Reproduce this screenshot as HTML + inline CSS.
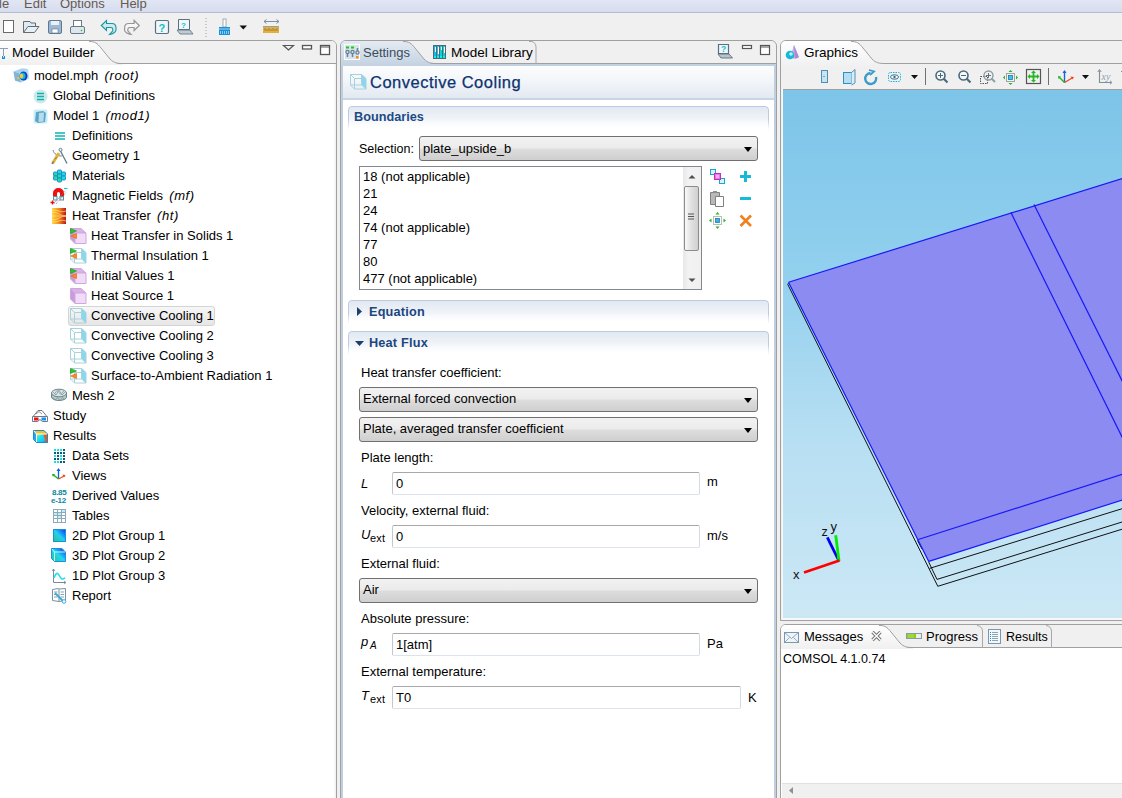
<!DOCTYPE html><html><head><meta charset="utf-8"><style>
*{box-sizing:border-box;margin:0;padding:0}
html,body{width:1122px;height:798px;overflow:hidden;background:#f0f0f0;font-family:"Liberation Sans",sans-serif;font-size:13px;color:#000}
.a{position:absolute}
svg{position:absolute;overflow:visible}
.t{position:absolute;white-space:pre;line-height:20px;height:20px}
.it{font-style:italic}
.sf{font-style:italic;letter-spacing:0.6px;margin-left:2px}
.pnl{position:absolute;border:1px solid #a0a0a0;border-radius:6px 6px 0 0;background:#fff;overflow:hidden}
.inp{position:absolute;background:#fff;border:1px solid #c4c8ce;border-top-color:#a8a8a8;border-bottom-color:#dde3ec;border-right-color:#d4dae4;border-radius:2px}
.inp span{position:absolute;left:3px;top:0;line-height:20px;white-space:pre}
.cmb{position:absolute;border:1px solid #707070;border-radius:3px;background:linear-gradient(#f2f2f2 0%,#ebebeb 48%,#dddddd 52%,#cfcfcf 100%)}
.cmb span{position:absolute;left:3px;top:1px;line-height:20px;white-space:pre}
.cmb i{position:absolute;right:5px;top:10px;width:0;height:0;border-left:4px solid transparent;border-right:4px solid transparent;border-top:5px solid #000}
.sec{position:absolute;left:348px;width:421px;height:24px;border:1px solid #bccbdf;border-bottom:none;border-radius:4px 4px 0 0;background:linear-gradient(#e1e8f1,#fff);-webkit-mask-image:linear-gradient(#000 55%,rgba(0,0,0,0) 100%)}
.sec b{position:absolute;left:20px;top:0;line-height:20px;color:#1d4a86;font-size:13px;white-space:pre}
.lb{position:absolute;white-space:pre;line-height:20px}
</style></head><body>
<div class="a" style="left:0;top:0;width:1122px;height:13px;background:linear-gradient(#e2e6f4,#d7ddef);border-bottom:1px solid #b4bccd"></div>
<div class="t" style="left:-1px;top:-6px;color:#665a4e">le</div>
<div class="t" style="left:24px;top:-6px;color:#665a4e">Edit</div>
<div class="t" style="left:60px;top:-6px;color:#665a4e">Options</div>
<div class="t" style="left:120px;top:-6px;color:#665a4e">Help</div>
<div id="tbar"></div>
<div class="pnl" style="left:-8px;top:40px;width:345px;height:770px">
 <div class="a" style="left:0;top:0;width:343px;height:23px;background:#f0f0f0;border-bottom:1px solid #a0a0a0"></div>
 <svg width="140" height="24" style="left:0;top:0"><defs><linearGradient id="g1" x1="0" y1="0" x2="0" y2="1"><stop offset="0" stop-color="#fff"/><stop offset="1" stop-color="#f0f0f0"/></linearGradient></defs><path d="M0,0 L96,0 C102,0 104,2 108,7 L117,18 C121,22 124,23 130,23 L130,24 L0,24 Z" fill="url(#g1)"/><path d="M96,0.5 C102,0.5 104,2 108,7 L117,18 C121,22 124,22.5 130,22.5" fill="none" stroke="#a0a0a0" stroke-width="1"/></svg>
</div>
<div class="a" style="left:334px;top:64px;width:2px;height:734px;background:linear-gradient(90deg,#fafafa,#f0f0f0)"></div>
<svg width="12" height="16" style="left:0;top:45px"><path d="M0,3.5 H8 M3.5,3.5 V11" stroke="#8aa0b4" stroke-width="1" fill="none"/><path d="M2,11 H3 V12.5 H4 V11 H5 V14 H2 Z" fill="#1a8ae0"/></svg>
<div class="t" style="left:12px;top:43px;font-size:13.5px">Model Builder</div>
<svg width="60" height="20" style="left:280px;top:42px"><path d="M3.5,3.5 L13.5,3.5 L8.5,8 Z" fill="none" stroke="#555" stroke-width="1.2"/><rect x="22.5" y="3.5" width="9" height="3.5" fill="#fff" stroke="#555" stroke-width="1.3"/><rect x="40.5" y="3.5" width="9" height="9" fill="#fff" stroke="#555" stroke-width="1.3"/><path d="M40.5,5 H49.5" stroke="#555"/></svg>
<div class="a" style="left:68px;top:306px;width:147px;height:20px;border:1px solid #d4d4d4;border-radius:3px;background:linear-gradient(#f7f7f7,#e6e6e6)"></div>
<div class="t" style="left:34px;top:66px">model.mph<span class="sf"> (root)</span></div>
<svg width="16" height="16" style="left:13px;top:68px"><path d="M0.5,3.5 L9,0.5 L15,1 L16,10.5 L8,14.5 L2,12.5 Z" fill="#cfe6f6"/><path d="M0.5,3.5 L6,5 L8,14.5 L2,12.5 Z" fill="#7fb4dc"/><path d="M6,5 L15,1 L16,10.5 L8,14.5 Z" fill="#b8daf2"/><path d="M0.5,3.5 L9,0.5 L15,1 L6,5 Z" fill="#a8d0ec"/><ellipse cx="10.5" cy="8" rx="4" ry="4.5" fill="#0a40c8"/><ellipse cx="9.5" cy="8" rx="3" ry="3.3" fill="#10b8d8"/><ellipse cx="8.5" cy="8" rx="1.8" ry="2.2" fill="#f0c838"/><circle cx="5" cy="10" r="1.3" fill="#e8c040"/></svg>
<div class="t" style="left:53px;top:86px">Global Definitions</div>
<svg width="16" height="16" style="left:33px;top:89px"><circle cx="7.5" cy="7.5" r="7" fill="#cdeaea"/><path d="M4,4.5 H11 M4,7.5 H11 M4,10.5 H11" stroke="#10b0b0" stroke-width="1.6"/></svg>
<div class="t" style="left:53px;top:106px">Model 1<span class="sf"> (mod1)</span></div>
<svg width="16" height="16" style="left:33px;top:109px"><rect x="0.5" y="0.5" width="14" height="14" rx="2" fill="#c9eef6"/><path d="M3,3 L10,2 L13,4 L12,13 L5,14 L2,12 Z" fill="#5aa6cc"/><path d="M6,4 L11,3.5 L10.5,12.5 L5.5,13 Z" fill="#b6dcec"/></svg>
<div class="t" style="left:72px;top:126px">Definitions</div>
<svg width="16" height="16" style="left:51px;top:127px"><path d="M4,6 H14 M4,9 H14 M4,12 H14" stroke="#10b4b0" stroke-width="1.7"/></svg>
<div class="t" style="left:72px;top:146px">Geometry 1</div>
<svg width="16" height="16" style="left:51px;top:148px"><path d="M9.5,3 L16,15.5" stroke="#5a7a86" stroke-width="1.3" fill="none"/><path d="M2,2 C3,6 6,8 11,8" stroke="#6a8a94" stroke-width="1" fill="none"/><circle cx="9.5" cy="1.8" r="1.5" fill="#fff" stroke="#5a7a86" stroke-width="1"/><path d="M1.5,15.5 L8,5" stroke="#e8b038" stroke-width="3"/><path d="M1,16 L2.5,13.5" stroke="#5a7a86" stroke-width="1.2"/><path d="M3.5,11 L6,9.5" stroke="#5a7a86" stroke-width="0.7"/></svg>
<div class="t" style="left:72px;top:166px">Materials</div>
<svg width="16" height="16" style="left:53px;top:169px"><rect x="4.5" y="1" width="4" height="4" rx="1" fill="#20d8e8" stroke="#1888c0" stroke-width="0.9"/><rect x="4.5" y="5" width="4" height="4" rx="1" fill="#20d8e8" stroke="#1888c0" stroke-width="0.9"/><rect x="4.5" y="9" width="4" height="4" rx="1" fill="#20d8e8" stroke="#1888c0" stroke-width="0.9"/><rect x="0.5" y="3" width="4" height="4" rx="1" fill="#20d8e8" stroke="#1888c0" stroke-width="0.9"/><rect x="0.5" y="7" width="4" height="4" rx="1" fill="#20d8e8" stroke="#1888c0" stroke-width="0.9"/><rect x="8.5" y="3" width="4" height="4" rx="1" fill="#20d8e8" stroke="#1888c0" stroke-width="0.9"/><rect x="8.5" y="7" width="4" height="4" rx="1" fill="#20d8e8" stroke="#1888c0" stroke-width="0.9"/><g fill="#30e030"><rect x="1.8" y="4.3" width="1.6" height="1.6"/><rect x="1.8" y="8.3" width="1.6" height="1.6"/><rect x="5.8" y="6.3" width="1.6" height="1.6"/><rect x="5.8" y="10.3" width="1.6" height="1.6"/></g></svg>
<div class="t" style="left:72px;top:186px">Magnetic Fields<span class="sf"> (mf)</span></div>
<svg width="16" height="16" style="left:51px;top:188px"><path d="M2,8 L2,5 A5.5,5 0 0 1 13,5 L13,8 L9,8 L9,5.5 A1.5,1.5 0 0 0 6,5.5 L6,8 Z" fill="#ec1010"/><rect x="2.5" y="8.5" width="3.5" height="3.5" fill="#e8f4f8" stroke="#6a8a98" stroke-width="1"/><rect x="9" y="8.5" width="3.5" height="3.5" fill="#e8f4f8" stroke="#6a8a98" stroke-width="1"/><path d="M3,15.5 L14.5,2.5 M5,16 L15.5,4" stroke="#6a8a98" stroke-width="0.9" stroke-dasharray="1,1"/><path d="M-0.5,14.5 h4 M1.5,12.5 v4" stroke="#e81010" stroke-width="1.3"/><path d="M13,0.5 h3.5" stroke="#18c0e0" stroke-width="1.2"/></svg>
<div class="t" style="left:72px;top:206px">Heat Transfer<span class="sf"> (ht)</span></div>
<svg width="16" height="16" style="left:51px;top:208px"><defs><linearGradient id="hg" x1="0" y1="0" x2="1" y2="0"><stop offset="0" stop-color="#ffd838"/><stop offset="0.5" stop-color="#f88a18"/><stop offset="1" stop-color="#b81818"/></linearGradient></defs><rect x="1" y="0" width="14" height="16" fill="url(#hg)"/><path d="M1,4 C7,4 9,8 15,8 M1,8 H15 M1,12 C7,12 9,8 15,8 M1,2 C8,2 9,5 15,3 M1,14 C8,14 9,11 15,13" stroke="#ffe890" stroke-width="0.8" fill="none" opacity="0.8"/></svg>
<div class="t" style="left:91px;top:226px">Heat Transfer in Solids 1</div>
<svg width="16" height="16" style="left:70px;top:228px"><path d="M0.5,0.5 L11,0.5 L16,5 L16,15.5 L5,15.5 L0.5,11 Z" fill="#f0dcf7"/><path d="M0.5,0.5 L11,0.5 L16,5 L5,5 Z" fill="#d9b2e8"/><path d="M0.5,0.5 L5,5 L5,15.5 L0.5,11 Z" fill="#c99bdc"/><path d="M0.5,0.5 L11,0.5 L16,5 L16,15.5 L5,15.5 L0.5,11 Z M5,5 H16 M5,5 V15.5" fill="none" stroke="#cfa6e0" stroke-width="1"/><path d="M0.5,0.5 L6.5,3 L0.5,5.5 Z" fill="#30c030" stroke="#20a020" stroke-width="0.7"/><path d="M6.5,5.5 L0.7,8 L6.5,10.5 Z" fill="#f88a2a" stroke="#e86a18" stroke-width="0.7"/></svg>
<div class="t" style="left:91px;top:246px">Thermal Insulation 1</div>
<svg width="16" height="16" style="left:70px;top:248px"><path d="M12,0.5 L16,4.5 L16,15 L12,11 Z" fill="#86d8ee"/><path d="M0.5,0.5 H11.5 V11 H0.5 Z M4.5,4.5 H16 V15 H4.5 Z M0.5,0.5 L4.5,4.5 M11.5,0.5 L16,4.5 M0.5,11 L4.5,15 M11.5,11 L16,15" fill="none" stroke="#a6d2dc" stroke-width="1"/><path d="M0.5,0.5 L6.5,3 L0.5,5.5 Z" fill="#30c030" stroke="#20a020" stroke-width="0.7"/><path d="M6.5,5.5 L0.7,8 L6.5,10.5 Z" fill="#f88a2a" stroke="#e86a18" stroke-width="0.7"/></svg>
<div class="t" style="left:91px;top:266px">Initial Values 1</div>
<svg width="16" height="16" style="left:70px;top:268px"><path d="M0.5,0.5 L11,0.5 L16,5 L16,15.5 L5,15.5 L0.5,11 Z" fill="#f0dcf7"/><path d="M0.5,0.5 L11,0.5 L16,5 L5,5 Z" fill="#d9b2e8"/><path d="M0.5,0.5 L5,5 L5,15.5 L0.5,11 Z" fill="#c99bdc"/><path d="M0.5,0.5 L11,0.5 L16,5 L16,15.5 L5,15.5 L0.5,11 Z M5,5 H16 M5,5 V15.5" fill="none" stroke="#cfa6e0" stroke-width="1"/><path d="M0.5,0.5 L6.5,3 L0.5,5.5 Z" fill="#30c030" stroke="#20a020" stroke-width="0.7"/><path d="M6.5,5.5 L0.7,8 L6.5,10.5 Z" fill="#f88a2a" stroke="#e86a18" stroke-width="0.7"/></svg>
<div class="t" style="left:91px;top:286px">Heat Source 1</div>
<svg width="16" height="16" style="left:70px;top:288px"><path d="M0.5,0.5 L11,0.5 L16,5 L16,15.5 L5,15.5 L0.5,11 Z" fill="#f0dcf7"/><path d="M0.5,0.5 L11,0.5 L16,5 L5,5 Z" fill="#d9b2e8"/><path d="M0.5,0.5 L5,5 L5,15.5 L0.5,11 Z" fill="#c99bdc"/><path d="M0.5,0.5 L11,0.5 L16,5 L16,15.5 L5,15.5 L0.5,11 Z M5,5 H16 M5,5 V15.5" fill="none" stroke="#cfa6e0" stroke-width="1"/></svg>
<div class="t" style="left:91px;top:306px">Convective Cooling 1</div>
<svg width="16" height="16" style="left:70px;top:308px"><path d="M12,0.5 L16,4.5 L16,15 L12,11 Z" fill="#86d8ee"/><path d="M0.5,0.5 H11.5 V11 H0.5 Z M4.5,4.5 H16 V15 H4.5 Z M0.5,0.5 L4.5,4.5 M11.5,0.5 L16,4.5 M0.5,11 L4.5,15 M11.5,11 L16,15" fill="none" stroke="#a6d2dc" stroke-width="1"/></svg>
<div class="t" style="left:91px;top:326px">Convective Cooling 2</div>
<svg width="16" height="16" style="left:70px;top:328px"><path d="M12,0.5 L16,4.5 L16,15 L12,11 Z" fill="#86d8ee"/><path d="M0.5,0.5 H11.5 V11 H0.5 Z M4.5,4.5 H16 V15 H4.5 Z M0.5,0.5 L4.5,4.5 M11.5,0.5 L16,4.5 M0.5,11 L4.5,15 M11.5,11 L16,15" fill="none" stroke="#a6d2dc" stroke-width="1"/></svg>
<div class="t" style="left:91px;top:346px">Convective Cooling 3</div>
<svg width="16" height="16" style="left:70px;top:348px"><path d="M12,0.5 L16,4.5 L16,15 L12,11 Z" fill="#86d8ee"/><path d="M0.5,0.5 H11.5 V11 H0.5 Z M4.5,4.5 H16 V15 H4.5 Z M0.5,0.5 L4.5,4.5 M11.5,0.5 L16,4.5 M0.5,11 L4.5,15 M11.5,11 L16,15" fill="none" stroke="#a6d2dc" stroke-width="1"/></svg>
<div class="t" style="left:91px;top:366px">Surface-to-Ambient Radiation 1</div>
<svg width="16" height="16" style="left:70px;top:368px"><path d="M12,0.5 L16,4.5 L16,15 L12,11 Z" fill="#86d8ee"/><path d="M0.5,0.5 H11.5 V11 H0.5 Z M4.5,4.5 H16 V15 H4.5 Z M0.5,0.5 L4.5,4.5 M11.5,0.5 L16,4.5 M0.5,11 L4.5,15 M11.5,11 L16,15" fill="none" stroke="#a6d2dc" stroke-width="1"/><path d="M0.5,0.5 L6.5,3 L0.5,5.5 Z" fill="#30c030" stroke="#20a020" stroke-width="0.7"/><path d="M6.5,5.5 L0.7,8 L6.5,10.5 Z" fill="#f88a2a" stroke="#e86a18" stroke-width="0.7"/></svg>
<div class="t" style="left:72px;top:386px">Mesh 2</div>
<svg width="16" height="16" style="left:51px;top:388px"><path d="M0.5,5 V9 A7.5,3.5 0 0 0 15.5,9 V5 Z" fill="#b8c8ca" stroke="#6a8488" stroke-width="1"/><ellipse cx="8" cy="5" rx="7.5" ry="3.8" fill="#d8e4e6" stroke="#6a8488" stroke-width="1"/><g stroke="#7a9498" stroke-width="0.7" fill="none"><path d="M2,4 L5,7 L8,2 L11,7 L14,4 M3,6.5 L6,2.5 L10,6.5 L13,2.8 M1.5,9 L4,12 L6.5,9.5 L9,12.5 L11.5,9.5 L14,12"/></g></svg>
<div class="t" style="left:53px;top:406px">Study</div>
<svg width="16" height="16" style="left:32px;top:409px"><path d="M1.5,7 L6,1.5 L10,1.5 L14.5,7" fill="none" stroke="#6a7a8a" stroke-width="1"/><path d="M4,5 L7,2.5 L10,5" fill="none" stroke="#6a7a8a" stroke-width="0.8"/><path d="M0.5,7.5 H15.5 V12.5 L10.5,12.5 L8,10.5 L5.5,12.5 L0.5,12.5 Z" fill="#fff" stroke="#6a7a8a" stroke-width="1"/><rect x="2" y="8.5" width="4.5" height="3" fill="#f01010"/><rect x="9.5" y="8.5" width="4.5" height="3" fill="#1890f0"/></svg>
<div class="t" style="left:53px;top:426px">Results</div>
<svg width="16" height="16" style="left:33px;top:430px"><defs><linearGradient id="rg" x1="0" y1="0" x2="1" y2="1"><stop offset="0" stop-color="#ffe020"/><stop offset="0.3" stop-color="#20e8f0"/><stop offset="0.7" stop-color="#18c8f0"/><stop offset="1" stop-color="#1060e8"/></linearGradient></defs><path d="M0.5,0.5 L11,0.5 L14.5,4 L14.5,12.5 L3.5,12.5 L0.5,9.5 Z" fill="#28a8e8"/><path d="M3.5,4 H14.5 V12.5 H3.5 Z" fill="url(#rg)"/><path d="M10,4 L14.5,4 L14.5,12.5 L12.5,12.5 C12,9 11,6 10,4Z" fill="#f05818"/><path d="M0.5,0.5 L11,0.5 L14.5,4 L3.5,4 Z" fill="#f8c020"/><path d="M0.5,0.5 L11,0.5 L14.5,4 L14.5,12.5 L3.5,12.5 L0.5,9.5 Z" fill="none" stroke="#2088d0"/><path d="M1,1 L3.5,4 H14 M3.5,4 V12" fill="none" stroke="#fff" stroke-width="1"/></svg>
<div class="t" style="left:72px;top:446px">Data Sets</div>
<svg width="16" height="16" style="left:54px;top:449px"><rect x="0" y="0" width="2" height="2" fill="#18e0e0"/><rect x="3" y="0" width="2" height="2" fill="#18e0e0"/><rect x="6" y="0" width="2" height="2" fill="#18e0e0"/><rect x="9" y="0" width="2" height="2" fill="#0a5a78"/><rect x="0" y="3" width="2" height="2" fill="#0a5a78"/><rect x="3" y="3" width="2" height="2" fill="#0a5a78"/><rect x="6" y="3" width="2" height="2" fill="#0a5a78"/><rect x="9" y="3" width="2" height="2" fill="#0a5a78"/><rect x="0" y="6" width="2" height="2" fill="#18e0e0"/><rect x="3" y="6" width="2" height="2" fill="#0a5a78"/><rect x="6" y="6" width="2" height="2" fill="#18e0e0"/><rect x="9" y="6" width="2" height="2" fill="#0a5a78"/><rect x="0" y="9" width="2" height="2" fill="#0a5a78"/><rect x="3" y="9" width="2" height="2" fill="#0a5a78"/><rect x="6" y="9" width="2" height="2" fill="#18e0e0"/><rect x="9" y="9" width="2" height="2" fill="#0a5a78"/><rect x="0" y="12" width="2" height="2" fill="#18e0e0"/><rect x="3" y="12" width="2" height="2" fill="#18e0e0"/><rect x="6" y="12" width="2" height="2" fill="#0a5a78"/><rect x="9" y="12" width="2" height="2" fill="#0a5a78"/></svg>
<div class="t" style="left:72px;top:466px">Views</div>
<svg width="16" height="16" style="left:51px;top:467px"><path d="M7.5,12 V2" stroke="#1060e0" stroke-width="1.3"/><path d="M5.5,4 L7.5,1 L9.5,4" fill="#1060e0"/><path d="M7.5,12 L2,7.5" stroke="#20b020" stroke-width="1.3"/><path d="M1,7 L4,7 L2,10 Z" fill="#20b020"/><path d="M7.5,12 L14,8.5" stroke="#f04818" stroke-width="1.3"/><path d="M14.5,8 L11.5,7.5 L13,10.5 Z" fill="#f04818"/></svg>
<div class="t" style="left:72px;top:486px">Derived Values</div>
<svg width="16" height="16" style="left:51px;top:488px"><text x="1" y="7" font-family="Liberation Sans" font-size="8" font-weight="bold" fill="#0a88a0" letter-spacing="-0.3">8.85</text><text x="0" y="15" font-family="Liberation Sans" font-size="8" font-weight="bold" fill="#0a88a0" letter-spacing="-0.3">e-12</text></svg>
<div class="t" style="left:72px;top:506px">Tables</div>
<svg width="16" height="16" style="left:52px;top:508px"><rect x="1.5" y="1.5" width="12" height="13" fill="#fff" stroke="#90a8b8"/><path d="M5.5,1.5 V14.5 M9.5,1.5 V14.5 M1.5,4.5 H13.5 M1.5,7.5 H13.5 M1.5,10.5 H13.5" stroke="#90a8b8"/><rect x="10" y="2" width="3" height="2" fill="#b8f0f8"/><rect x="2" y="5" width="3" height="2" fill="#b8f0f8"/><rect x="6" y="5" width="3" height="2" fill="#b8f0f8"/><rect x="6" y="8" width="3" height="2" fill="#b8f0f8"/></svg>
<div class="t" style="left:72px;top:526px">2D Plot Group 1</div>
<svg width="16" height="16" style="left:51px;top:528px"><defs><linearGradient id="p2" x1="1" y1="0" x2="0" y2="1"><stop offset="0" stop-color="#1030f0"/><stop offset="0.5" stop-color="#20d0f0"/><stop offset="1" stop-color="#30c080"/></linearGradient></defs><rect x="2.5" y="1.5" width="12" height="12" fill="url(#p2)" stroke="#1a90e0"/></svg>
<div class="t" style="left:72px;top:546px">3D Plot Group 2</div>
<svg width="16" height="16" style="left:51px;top:548px"><defs><linearGradient id="p3" x1="1" y1="0" x2="0" y2="1"><stop offset="0" stop-color="#1030f0"/><stop offset="0.5" stop-color="#20d8f0"/><stop offset="1" stop-color="#30c080"/></linearGradient></defs><path d="M0.5,0.5 L11,0.5 L14.5,4 L14.5,13.5 L3.5,13.5 L0.5,10.5 Z" fill="url(#p3)" stroke="#1a90e0"/><path d="M1,1 L3.5,4 H14 M3.5,4 V13" fill="none" stroke="#c0f4ff" stroke-width="1"/></svg>
<div class="t" style="left:72px;top:566px">1D Plot Group 3</div>
<svg width="16" height="16" style="left:51px;top:568px"><path d="M2.5,1 V14.5 H15" fill="none" stroke="#7a8a96"/><path d="M1,3 L2.5,1 L4,3 M13,13 L15,14.5 L13,16" fill="none" stroke="#7a8a96" stroke-width="0.8"/><path d="M3,10 C5,5 6,4 8,7 C10,11 11,12 14,10" fill="none" stroke="#20e0f0" stroke-width="1.6"/></svg>
<div class="t" style="left:72px;top:586px">Report</div>
<svg width="16" height="16" style="left:51px;top:587px"><path d="M1.5,2.5 L7.5,1.5 L8,2 L14.5,1.5 L14.5,13.5 L8,14.5 L1.5,13.5 Z" fill="#fff" stroke="#7890a0"/><path d="M8,2 V14" stroke="#7890a0"/><path d="M3,5 H6.5 M3,7.5 H6.5 M3,10 H6.5 M9.5,5 H13 M9.5,7.5 H13 M9.5,10 H13" stroke="#8aa0b0"/><path d="M4,6 L13,15" stroke="#40a8d8" stroke-width="1.8"/><circle cx="13" cy="14.5" r="1.8" fill="#fff" stroke="#40a8d8"/></svg>
<div class="pnl" style="left:340px;top:40px;width:437px;height:770px;background:#bfcfdf">
 <div class="a" style="left:0;top:0;width:435px;height:23px;background:#f0f0f0;border-bottom:1px solid #a0a0a0"></div>
 <svg width="200" height="26" style="left:0;top:0"><defs><linearGradient id="g2" x1="0" y1="0" x2="0" y2="1"><stop offset="0" stop-color="#e4ebf2"/><stop offset="1" stop-color="#c2d1e0"/></linearGradient></defs><path d="M0,0 L62,0 C68,0 70,2 74,7 L83,18 C87,22 90,23 96,23 L96,26 L0,26 Z" fill="url(#g2)"/><path d="M62,0.5 C68,0.5 70,2 74,7 L83,18 C87,22 90,22.5 96,22.5 L200,22.5" fill="none" stroke="#a0a0a0" stroke-width="1"/></svg>
 <svg width="12" height="24" style="left:188px;top:0"><path d="M0,0.5 L2,0.5 C5,0.5 7,3 7,6 L7,23" fill="none" stroke="#a8a8a8"/></svg>
 <div class="a" style="left:96px;top:23px;width:340px;height:2px;background:#c2d1e0"></div>
 <div class="a" style="left:2px;top:25px;width:431px;height:760px;background:#fff"></div>
 <div class="a" style="left:2px;top:25px;width:431px;height:34px;background:linear-gradient(#fdfdfe 0%,#f3f6fa 45%,#e3e9f1 100%);border-bottom:2px solid #c8d5e4"></div>
</div>
<svg width="16" height="16" style="left:344px;top:44px"><rect x="0.5" y="0.5" width="15" height="15" fill="#d6e2ec" stroke="#fcfdfe"/><rect x="2" y="2.5" width="3" height="2" fill="#10d010"/><rect x="7" y="2.5" width="3" height="2" fill="#10d010"/><g fill="none" stroke="#6a8296" stroke-width="1.3"><circle cx="3.5" cy="8" r="1.6"/><circle cx="8.5" cy="8" r="1.6"/><circle cx="13.5" cy="8.5" r="1.6"/></g><path d="M3.5,9.5 V13 M8.5,9.5 V13 M13.5,4 V7" stroke="#6a8296" stroke-width="1.5"/><rect x="12" y="12" width="2.5" height="2.5" fill="#f09010"/></svg>
<div class="t" style="left:363px;top:43px;color:#3c4c5c">Settings</div>
<svg width="14" height="14" style="left:433px;top:45px"><rect x="0" y="0" width="13" height="14" fill="#4a6a7a"/><rect x="1" y="1" width="2" height="12" fill="#1ab8f0"/><rect x="4" y="1" width="2" height="12" fill="#30b8e0"/><rect x="7" y="1" width="2" height="12" fill="#10d0d0"/><rect x="10" y="1" width="2" height="12" fill="#10d0c8"/><g fill="#fff"><rect x="2" y="2" width="1" height="5"/><rect x="5" y="2" width="1" height="7"/><rect x="8" y="2" width="1" height="3"/><rect x="11" y="2" width="1" height="6"/></g><g fill="#00f4f0"><rect x="1" y="11" width="2" height="2"/><rect x="4" y="11" width="2" height="2"/><rect x="7" y="11" width="2" height="2"/><rect x="10" y="11" width="2" height="2"/></g></svg>
<div class="t" style="left:451px;top:43px;font-size:13.5px">Model Library</div>
<svg width="60" height="20" style="left:716px;top:42px"><path d="M2.5,2.5 H12.5 V11.5 H2.5 Z" fill="#f0f6fa" stroke="#5a7080" stroke-width="1.2"/><path d="M2,12 L13,12 L16.5,16 L5,16 Z" fill="#b8c4cc" stroke="#5a7080" stroke-width="0.9"/><text x="5" y="10" font-family="Liberation Sans" font-size="8.5" font-weight="bold" fill="#10c0c8">?</text><rect x="26.5" y="3.5" width="9" height="3" fill="#fff" stroke="#555" stroke-width="1.2"/><rect x="44.5" y="3.5" width="9" height="9" fill="#fff" stroke="#555" stroke-width="1.2"/><path d="M44.5,5 H53.5" stroke="#555"/></svg>
<svg width="16" height="16" style="left:350px;top:74px"><path d="M12,0.5 L16,4.5 L16,15 L12,11 Z" fill="#86d8ee"/><path d="M0.5,0.5 H11.5 V11 H0.5 Z M4.5,4.5 H16 V15 H4.5 Z M0.5,0.5 L4.5,4.5 M11.5,0.5 L16,4.5 M0.5,11 L4.5,15 M11.5,11 L16,15" fill="none" stroke="#a6d2dc" stroke-width="1"/></svg>
<div class="t" style="left:370px;top:72px;font-size:16.5px;letter-spacing:0.5px;color:#0c3270;-webkit-text-stroke:0.25px #0c3270;line-height:20px">Convective Cooling</div>
<div class="sec" style="top:106px"></div>
<div class="t" style="left:354px;top:107px;color:#1d4a86;font-weight:bold;font-size:12.7px">Boundaries</div>
<div class="t" style="left:359px;top:139px;font-size:12.5px">Selection:</div>
<div class="cmb" style="left:419px;top:136px;width:339px;height:25px"><span style="top:2px">plate_upside_b</span><i></i></div>
<div class="a" style="left:359px;top:166px;width:343px;height:124px;border:1px solid #828790;background:#fff"></div>
<div class="t" style="left:363px;top:167px">18 (not applicable)</div>
<div class="t" style="left:363px;top:184px">21</div>
<div class="t" style="left:363px;top:201px">24</div>
<div class="t" style="left:363px;top:218px">74 (not applicable)</div>
<div class="t" style="left:363px;top:235px">77</div>
<div class="t" style="left:363px;top:252px">80</div>
<div class="t" style="left:363px;top:269px">477 (not applicable)</div>
<div class="a" style="left:683px;top:167px;width:18px;height:122px;background:linear-gradient(90deg,#e8e8e8,#f2f2f2 30%,#f0f0f0)"></div>
<svg width="8" height="5" style="left:688px;top:174px"><path d="M0.5,4.5 L4,1 L7.5,4.5 Z" fill="#505050"/></svg>
<svg width="8" height="5" style="left:688px;top:278px"><path d="M0.5,0.5 L4,4 L7.5,0.5 Z" fill="#505050"/></svg>
<div class="a" style="left:684px;top:186px;width:15px;height:65px;border:1px solid #8c8c8c;border-radius:2px;background:linear-gradient(90deg,#fafafa,#e4e4e4 40%,#cfcfcf 100%)"></div>
<svg width="8" height="8" style="left:688px;top:213px"><path d="M0,1 H6 M0,3.5 H6 M0,6 H6" stroke="#555" stroke-width="1.2"/></svg>
<svg width="18" height="18" style="left:709px;top:168px"><rect x="1.5" y="1.5" width="5" height="5" fill="#d8f4fa" stroke="#18a8c8"/><rect x="10.5" y="10.5" width="5" height="5" fill="#d8f4fa" stroke="#18a8c8"/><rect x="5.5" y="5.5" width="6" height="6" fill="#f070f0" stroke="#c030c0"/><rect x="7" y="7" width="3" height="3" fill="#ffb0ff"/></svg>
<svg width="14" height="14" style="left:739px;top:170px"><path d="M6.5,1 V12 M1,6.5 H12" stroke="#18b8d8" stroke-width="3"/></svg>
<svg width="16" height="18" style="left:709px;top:190px"><path d="M1.5,2.5 H10.5 V14.5 H1.5 Z" fill="#b8b8b8" stroke="#808080"/><rect x="4" y="1" width="4" height="2" fill="#909090"/><path d="M6.5,6.5 H14.5 V16.5 H6.5 Z" fill="#fff" stroke="#808080"/></svg>
<svg width="14" height="4" style="left:739px;top:197px"><path d="M1,1.5 H12" stroke="#18b8d8" stroke-width="3"/></svg>
<svg width="18" height="18" style="left:709px;top:212px"><rect x="4.5" y="4.5" width="8" height="8" fill="none" stroke="#777" stroke-dasharray="1,1"/><rect x="6.5" y="6.5" width="4" height="4" fill="#40b0e0" stroke="#2080b0" stroke-width="0.8"/><g fill="#22b822"><path d="M8.5,0 L6.5,2.5 H10.5Z"/><path d="M8.5,17 L6.5,14.5 H10.5Z"/><path d="M0,8.5 L2.5,6.5 V10.5Z"/><path d="M17,8.5 L14.5,6.5 V10.5Z"/></g></svg>
<svg width="14" height="14" style="left:739px;top:214px"><path d="M1.5,1.5 L12,12 M12,1.5 L1.5,12" stroke="#f08020" stroke-width="2.6"/></svg>
<div class="sec" style="top:300px"></div>
<div class="t" style="left:369px;top:302px;color:#1b4680;font-weight:bold;font-size:12.7px;letter-spacing:0.2px">Equation</div>
<svg width="8" height="10" style="left:357px;top:307px"><path d="M0,0 L5,4.5 L0,9 Z" fill="#1d3f70"/></svg>
<div class="sec" style="top:331px"></div>
<div class="t" style="left:369px;top:333px;color:#1b4680;font-weight:bold;font-size:12.7px;letter-spacing:0.2px">Heat Flux</div>
<svg width="10" height="8" style="left:355px;top:341px"><path d="M0,0 L9,0 L4.5,5 Z" fill="#1d3f70"/></svg>
<div class="t" style="left:361px;top:363px">Heat transfer coefficient:</div>
<div class="cmb" style="left:359px;top:387px;width:399px;height:25px"><span>External forced convection</span><i></i></div>
<div class="cmb" style="left:359px;top:417px;width:399px;height:25px"><span>Plate, averaged transfer coefficient</span><i></i></div>
<div class="t" style="left:361px;top:448px">Plate length:</div>
<div class="t it" style="left:361px;top:474px">L</div>
<div class="inp" style="left:392px;top:472px;width:308px;height:23px"><span style="top:1px">0</span></div>
<div class="t" style="left:707px;top:472px;font-size:13px">m</div>
<div class="t" style="left:361px;top:501px">Velocity, external fluid:</div>
<div class="t it" style="left:361px;top:525px">U</div><div class="t" style="left:370px;top:528px;font-size:11px;letter-spacing:0.2px">ext</div>
<div class="inp" style="left:392px;top:525px;width:308px;height:23px"><span style="top:1px">0</span></div>
<div class="t" style="left:707px;top:526px;font-size:13px">m/s</div>
<div class="t" style="left:361px;top:554px">External fluid:</div>
<div class="cmb" style="left:359px;top:578px;width:399px;height:25px"><span>Air</span><i></i></div>
<div class="t" style="left:361px;top:609px">Absolute pressure:</div>
<div class="t it" style="left:361px;top:632px">p</div><div class="t it" style="left:370px;top:636px;font-size:10px">A</div>
<div class="inp" style="left:392px;top:633px;width:308px;height:23px"><span style="top:1px">1[atm]</span></div>
<div class="t" style="left:707px;top:634px;font-size:13px">Pa</div>
<div class="t" style="left:361px;top:662px">External temperature:</div>
<div class="t it" style="left:361px;top:686px">T</div><div class="t" style="left:370px;top:689px;font-size:11px;letter-spacing:0.2px">ext</div>
<div class="inp" style="left:392px;top:686px;width:349px;height:23px"><span style="top:1px">T0</span></div>
<div class="t" style="left:748px;top:688px;font-size:13px">K</div>
<div class="pnl" style="left:780px;top:40px;width:360px;height:581px;background:#f0f0f0">
 <svg width="360" height="26" style="left:0;top:0"><defs><linearGradient id="g3" x1="0" y1="0" x2="0" y2="1"><stop offset="0" stop-color="#fff"/><stop offset="1" stop-color="#f0f0f0"/></linearGradient></defs><path d="M0,0 L70,0 C76,0 78,2 82,7 L91,18 C95,22 98,23 104,23 L104,26 L0,26 Z" fill="url(#g3)"/><path d="M70,0.5 C76,0.5 78,2 82,7 L91,18 C95,22 98,22.5 104,22.5 L360,22.5" fill="none" stroke="#a0a0a0" stroke-width="1"/></svg>
 <div class="a" style="left:1px;top:48px;width:360px;height:531px;background:#f8f8f8"></div>
 <div class="a" style="left:2px;top:48px;width:360px;height:529px;border-top:1px solid #a0a0a0;background:linear-gradient(#7cc4e8 0%,#92d0ee 35%,#b6def2 65%,#cce8f5 100%)"></div>
</div>
<svg width="16" height="16" style="left:785px;top:44px"><path d="M9,1 L14,13 C12,15 8,15 6,13 Z" fill="#b088d0"/><path d="M9,1 L10,14 C8,14.5 7,14 6,13Z" fill="#d0a8e8"/><circle cx="5" cy="11" r="4.3" fill="#18b8d8"/><circle cx="6" cy="10" r="1.8" fill="#b8f0f8"/></svg>
<div class="t" style="left:804px;top:43px;font-size:13.5px">Graphics</div>
<svg width="1122" height="100" style="left:0;top:0"><rect x="821.5" y="70.5" width="6" height="12" fill="#c8e4f0" stroke="#4a90b0"/><path d="M823,76.5 h2" stroke="#4a90b0" stroke-width="0.7"/><rect x="843.5" y="72.5" width="8" height="11" fill="#b8dcf0" stroke="#2a90c8"/><path d="M851.5,72.5 L855,69.5 V83 L851.5,85" fill="#d8eef8" stroke="#5a90b0"/><path d="M870.5,73 A5.5,5.5 0 1 0 876,77" fill="none" stroke="#3a9ac8" stroke-width="2.4"/><path d="M869,70 L874,71.5 L870,75" fill="none" stroke="#3a9ac8" stroke-width="1.8"/><rect x="888.5" y="72.5" width="12" height="9" rx="2" fill="none" stroke="#10b0e8" stroke-dasharray="1.5,1"/><ellipse cx="894.5" cy="77" rx="4" ry="2.2" fill="#fff" stroke="#3a6a80" stroke-width="1"/><circle cx="894.5" cy="77" r="1.2" fill="#3a6a80"/><path d="M911,75 H918 L914.5,79 Z" fill="#111"/><path d="M925.5,68 V85" stroke="#707070"/><circle cx="940.5" cy="75.5" r="4.5" fill="#f4f8fa" stroke="#4a6a7a" stroke-width="1.6"/><path d="M943.5,78.5 L947.5,82.5" stroke="#4a6a7a" stroke-width="2.2"/><path d="M938,75.5 h5 M940.5,73 v5" stroke="#4a6a7a" stroke-width="1"/><circle cx="963.5" cy="75.5" r="4.5" fill="#f4f8fa" stroke="#4a6a7a" stroke-width="1.6"/><path d="M966.5,78.5 L970.5,82.5" stroke="#4a6a7a" stroke-width="2.2"/><path d="M961,75.5 h5" stroke="#4a6a7a" stroke-width="1"/><rect x="980.5" y="76.5" width="7" height="7" fill="none" stroke="#555" stroke-dasharray="1.5,1"/><circle cx="988.5" cy="75.5" r="4.5" fill="none" stroke="#8aa0aa" stroke-width="1.4"/><path d="M991.5,78.5 L995,82" stroke="#8aa0aa" stroke-width="2"/><path d="M986,75.5 h5 M988.5,73 v5" stroke="#555" stroke-width="0.8"/><rect x="1006.5" y="73.5" width="8" height="8" fill="none" stroke="#555" stroke-dasharray="1,1"/><rect x="1008.5" y="75.5" width="4" height="4" fill="#40c0f0" stroke="#1a7ab0" stroke-width="0.8"/><g fill="#22b822"><path d="M1010.5,70 L1008.5,72 H1012.5Z"/><path d="M1010.5,85 L1008.5,83 H1012.5Z"/><path d="M1003,77.5 L1005,75.5 V79.5Z"/><path d="M1018,77.5 L1016,75.5 V79.5Z"/></g><rect x="1026.5" y="69.5" width="14" height="14" fill="#f0f0f0" stroke="#555" stroke-width="1.2"/><path d="M1033.5,73 V80 M1030,76.5 H1037" stroke="#22b822" stroke-width="1.8"/><g fill="#22b822"><path d="M1033.5,70.5 L1031,73 H1036Z"/><path d="M1033.5,82.5 L1031,80 H1036Z"/><path d="M1027.5,76.5 L1030,74 V79Z"/><path d="M1039.5,76.5 L1037,74 V79Z"/></g><path d="M1048.5,68 V85" stroke="#707070"/><path d="M1064.5,82.5 V71" stroke="#1a60e0" stroke-width="1.4"/><path d="M1062.5,73 L1064.5,70 L1066.5,73Z" fill="#1a60e0"/><path d="M1064.5,82.5 L1059,77" stroke="#20b820" stroke-width="1.4"/><path d="M1058,76 L1061,76.5 L1058.5,79Z" fill="#20b820"/><path d="M1064.5,82.5 L1073,77.5" stroke="#f04818" stroke-width="1.4"/><path d="M1074,77 L1070.5,76.5 L1072.5,79.5Z" fill="#f04818"/><path d="M1082,75 H1089 L1085.5,79 Z" fill="#111"/><path d="M1099.5,70.5 V82.5 H1111" fill="none" stroke="#7a909a" stroke-width="1.1"/><path d="M1097.8,72 L1099.5,69.5 L1101.2,72 M1110,80.8 L1112,82.5 L1110,84.2" fill="none" stroke="#7a909a" stroke-width="1"/><text x="1101.5" y="79.5" font-family="Liberation Serif" font-style="italic" font-size="10" fill="#90a0a8">xy</text><path d="M1121,71.5 h2" stroke="#7a909a" stroke-width="1.2"/></svg>
<div class="a" style="left:783px;top:90px;width:339px;height:528px;overflow:hidden"><svg width="1122" height="798" style="left:-783px;top:-90px"><path d="M788.5,282.3 L1125,177.6 L1125,499.2 L928.8,561.4 Z" fill="#8b8bf1"/><path d="M788.4,283.2 L787.8,284.5 L937.8,586.3 M929.5,568.4 L1125,507.8 M937,579.4 L1125,521.1 M937.8,586.3 L1125,528.3 M928.5,561.6 L937,579.4 M917.5,540.5 L922,549" stroke="#111" stroke-width="1" fill="none"/><path d="M788.5,282.3 L1125,177.6 M788.5,282.3 L928.8,561.4 M928.8,561.4 L1125,499.2 M917.5,539.8 L1125,473.4 M1010.8,212.3 L1125,443.0 M1034,204.6 L1125,386.6" stroke="#1818f8" stroke-width="1.2" fill="none"/><path d="M839,561 L827.3,537.4" stroke="#0000ee" stroke-width="2.8"/><path d="M839,561 L835.7,535.2" stroke="#00ee00" stroke-width="2.8"/><path d="M839.5,560.5 L804,572.5" stroke="#ff0000" stroke-width="2.8"/><text x="793" y="579" font-family="Liberation Sans" font-size="13" fill="#111">x</text><text x="821.5" y="535.5" font-family="Liberation Sans" font-size="12.5" fill="#111">z</text><text x="830.5" y="531" font-family="Liberation Sans" font-size="13" fill="#111">y</text></svg></div>
<div class="pnl" style="left:780px;top:624px;width:360px;height:200px">
 <div class="a" style="left:0;top:0;width:360px;height:23px;background:#f0f0f0;border-bottom:1px solid #a0a0a0"></div>
 <svg width="360" height="26" style="left:0;top:0"><defs><linearGradient id="g4" x1="0" y1="0" x2="0" y2="1"><stop offset="0" stop-color="#fff"/><stop offset="1" stop-color="#f0f0f0"/></linearGradient></defs><path d="M0,0 L98,0 C104,0 106,2 110,7 L119,18 C123,22 126,23 132,23 L132,24 L0,24 Z" fill="url(#g4)"/><path d="M98,0.5 C104,0.5 106,2 110,7 L119,18 C123,22 126,22.5 132,22.5" fill="none" stroke="#a0a0a0" stroke-width="1"/><path d="M196,0.5 C199,0.5 201.5,3 201.5,6 V23 M265,0.5 C268,0.5 270.5,3 270.5,6 V23" fill="none" stroke="#a8a8a8"/></svg>
 <div class="a" style="left:1px;top:158px;width:360px;height:17px;background:#f0f0f0;border-top:1px solid #e0e0e0"></div>
</div>
<svg width="300" height="30" style="left:0;top:0"></svg>
<svg width="1122" height="798" style="left:0;top:0"><rect x="784.5" y="632.5" width="14" height="10" fill="#eef4f8" stroke="#7a98b0"/><path d="M784.5,632.5 L791.5,638.5 L798.5,632.5 M784.5,642.5 L789.5,637.5 M798.5,642.5 L793.5,637.5" fill="none" stroke="#7a98b0" stroke-width="0.8"/><path d="M872.5,632 L880.5,640 M880.5,632 L872.5,640" stroke="#707070" stroke-width="3.2"/><path d="M872.5,632 L880.5,640 M880.5,632 L872.5,640" stroke="#fff" stroke-width="1.4"/><rect x="906.5" y="633.5" width="15" height="5" fill="#e4eaee" stroke="#8a9aa8"/><rect x="907" y="634" width="9" height="4" fill="#88d010"/><path d="M909,634 v4 M911,634 v4 M913,634 v4 M917,634 v4 M919,634 v4" stroke="#fff" stroke-width="0.5" opacity="0.7"/><rect x="988.5" y="629.5" width="12" height="14" fill="#f4f8fa" stroke="#7a98aa"/><path d="M992,632.5 h6 M992,634.5 h6 M992,636.5 h6 M992,638.5 h6 M992,640.5 h6" stroke="#8aa8b8" stroke-width="1"/><path d="M990,632.5 h1 M990,634.5 h1 M990,636.5 h1 M990,638.5 h1 M990,640.5 h1" stroke="#2a80d0" stroke-width="1"/><path d="M793,787 L789,790.5 L793,794 Z" fill="#909090"/></svg>
<div class="t" style="left:804px;top:627px;font-size:13px">Messages</div>
<div class="t" style="left:926px;top:627px;font-size:13px">Progress</div>
<div class="t" style="left:1006px;top:627px;font-size:12.5px">Results</div>
<div class="t" style="left:783px;top:649px;font-size:12.5px">COMSOL 4.1.0.74</div>
<svg width="1122" height="60" style="left:0;top:0"><rect x="3.5" y="20.5" width="10" height="12" fill="#fff" stroke="#6a6a6a"/><path d="M23.5,32.5 V21.5 H30 L31,23 H35.5 V26" fill="#dbeaf4" stroke="#6a6a6a"/><path d="M23.5,32.5 L28,26.5 H39 L34.5,32.5 Z" fill="#e4f0f8" stroke="#6a6a6a"/><rect x="48.5" y="20.5" width="13" height="13" rx="1.5" fill="#9cb8d4" stroke="#60788c"/><rect x="51" y="21" width="8" height="4" fill="#e8f0f8"/><rect x="52" y="29" width="6" height="4" fill="#fff" stroke="#60788c" stroke-width="0.6"/><rect x="73.5" y="20.5" width="8" height="6" fill="#fff" stroke="#6a7a88"/><rect x="70.5" y="26.5" width="14" height="7" rx="1.5" fill="#dce6ee" stroke="#6a7a88"/><circle cx="81.5" cy="30.5" r="0.8" fill="#20c020"/><path d="M101.3,25.5 L106.5,20.5 V23.5 H112 C114.5,23.5 116,25.5 116,28 V30 C116,32 113,34 109.5,34.5 L112.8,30.8 C113,28.8 112.5,27.5 111,27.5 H106.5 V30.5 Z" fill="#cdebee" stroke="#1a96a0" stroke-width="1.1" stroke-linejoin="miter"/><g transform="translate(240.6,0) scale(-1,1)"><path d="M101.3,25.5 L106.5,20.5 V23.5 H112 C114.5,23.5 116,25.5 116,28 V30 C116,32 113,34 109.5,34.5 L112.8,30.8 C113,28.8 112.5,27.5 111,27.5 H106.5 V30.5 Z" fill="#f6f6f6" stroke="#959595" stroke-width="1.2"/></g><rect x="155.5" y="20.5" width="13" height="13" rx="1.5" fill="#f0f6fa" stroke="#5a7080" stroke-width="1.2"/><text x="158.5" y="31.5" font-family="Liberation Sans" font-size="11" font-weight="bold" fill="#10c0c8">?</text><path d="M178.5,19.5 H189.5 V29.5 H178.5 Z" fill="#f0f6fa" stroke="#5a7080"/><path d="M177,30 H190 L193,34 H180 Z" fill="#c0ccd4" stroke="#5a7080" stroke-width="0.8"/><text x="181" y="27.5" font-family="Liberation Sans" font-size="8" font-weight="bold" fill="#10c0c8">?</text><path d="M206,18 V37" stroke="#a0a0a0" stroke-width="1" stroke-dasharray="1,2"/><rect x="223" y="19" width="3" height="8" fill="#fff" stroke="#8a9aa8" stroke-width="0.8"/><rect x="219" y="27" width="11" height="8" fill="#1a90d8"/><path d="M219,29 h11" stroke="#a0d8f0" stroke-width="1"/><path d="M220.5,31 v3 M222.5,31 v3 M224.5,31 v3 M226.5,31 v3 M228.5,31 v3" stroke="#c0e8ff" stroke-width="0.7"/><path d="M239.5,25.5 H247 L243.25,29.5 Z" fill="#111"/><path d="M264,21.5 H279 M266.5,19.5 L264,21.5 L266.5,23.5 M276.5,19.5 L279,21.5 L276.5,23.5" fill="none" stroke="#7a90a0" stroke-width="1"/><rect x="263" y="27" width="16" height="6" fill="#e0b040"/><path d="M263,26.5 h16" stroke="#90a0b0"/><path d="M265,31 v-3 M267,31 v-2 M269,31 v-3 M271,31 v-2 M273,31 v-3 M275,31 v-2 M277,31 v-3" stroke="#806020" stroke-width="0.6"/></svg>
</body></html>
